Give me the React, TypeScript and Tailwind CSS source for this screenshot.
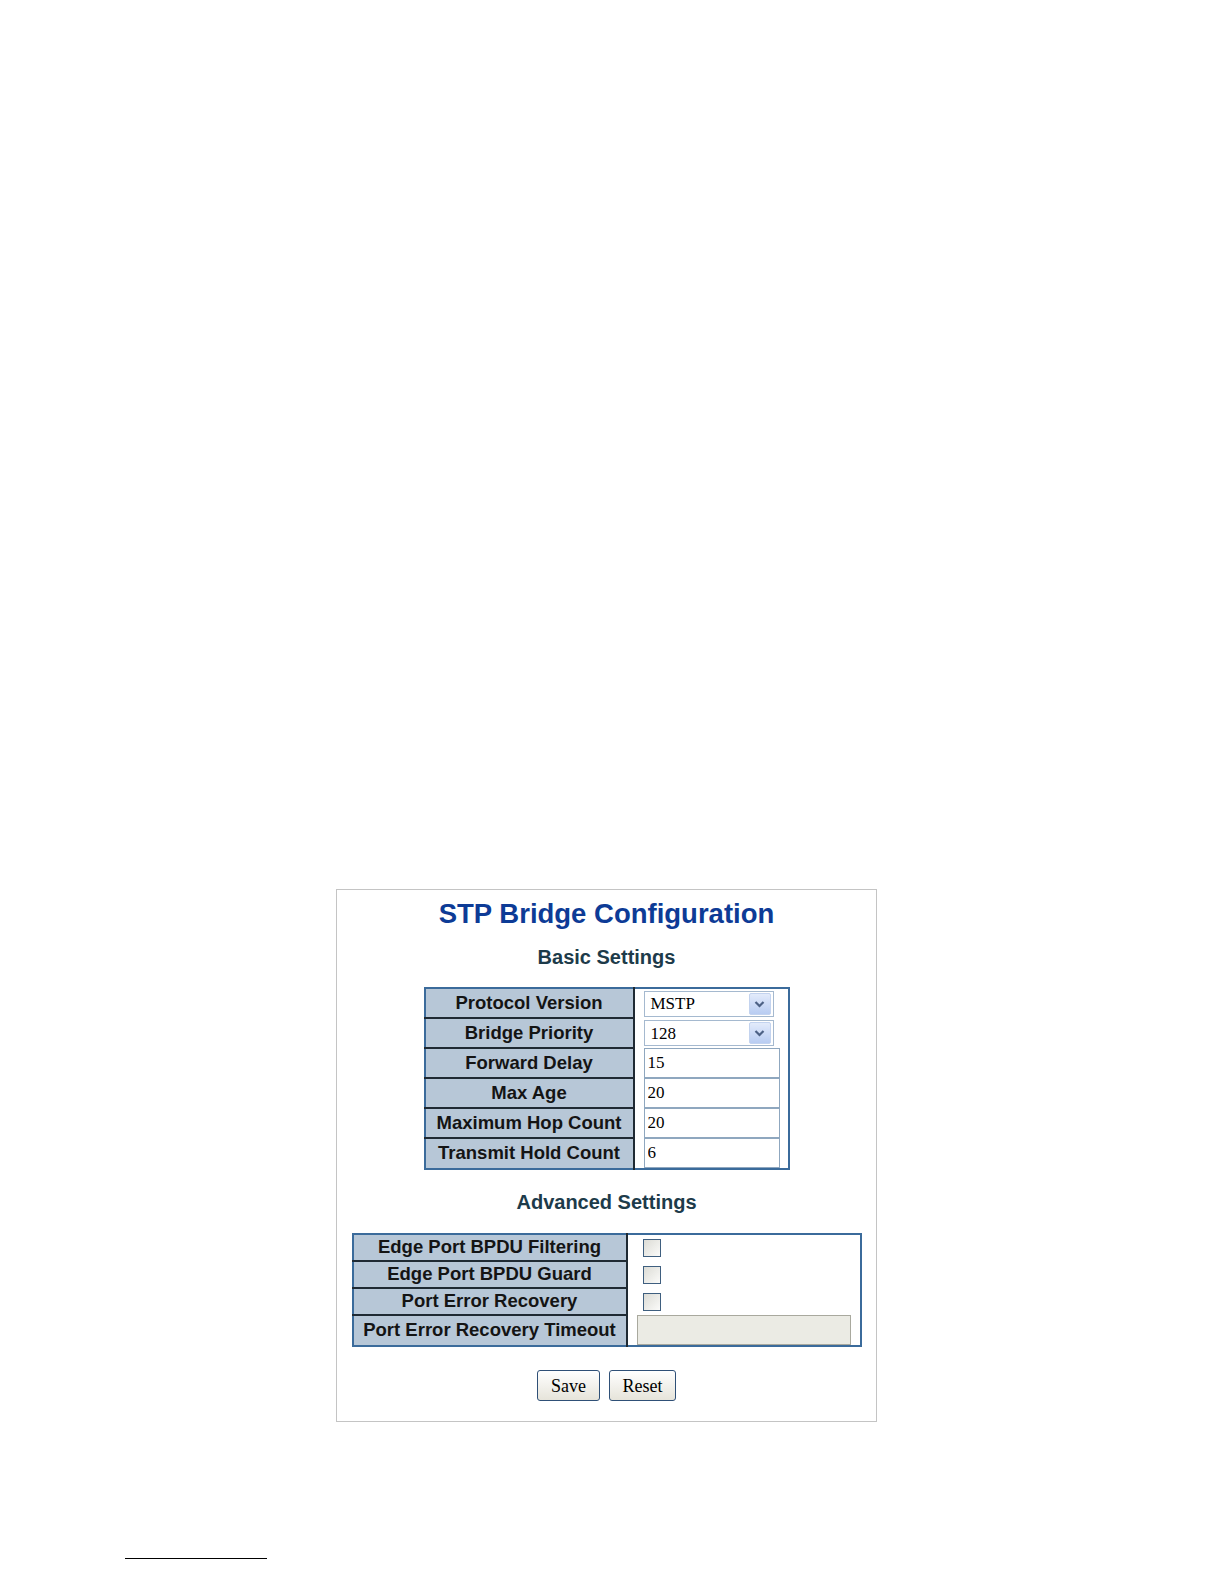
import React from 'react';

const basicRows: { label: string; kind: 'select' | 'input'; value: string }[] = [
  { label: 'Protocol Version', kind: 'select', value: 'MSTP' },
  { label: 'Bridge Priority', kind: 'select', value: '128' },
  { label: 'Forward Delay', kind: 'input', value: '15' },
  { label: 'Max Age', kind: 'input', value: '20' },
  { label: 'Maximum Hop Count', kind: 'input', value: '20' },
  { label: 'Transmit Hold Count', kind: 'input', value: '6' },
];

const advancedRows = ['Edge Port BPDU Filtering', 'Edge Port BPDU Guard', 'Port Error Recovery'];

const FakeSelect = ({ value }: { value: string }) => (
  <div className="flex h-[26px] w-[130px] items-center border border-[#a5b9cf] bg-white pl-[6px] pr-[2px]">
    <span className="flex-1 font-['Liberation_Serif',serif] text-[17px] leading-none text-black">{value}</span>
    <span className="flex h-[22px] w-[22px] items-center justify-center rounded-[2px] border border-[#c3d3ef] bg-gradient-to-b from-[#e3ebfb] to-[#b8ccf2]">
      <svg width="11" height="8" viewBox="0 0 11 8">
        <path d="M1.5 2 L5.5 6 L9.5 2" fill="none" stroke="#4d6185" strokeWidth="2.2" />
      </svg>
    </span>
  </div>
);

const Checkbox = () => (
  <span className="block h-[18px] w-[18px] border border-[#3f5f7f] bg-gradient-to-br from-[#dcdcd6] to-[#fbfbf9]" />
);

export default function App() {
  return (
    <div className="h-[1584px] w-full overflow-hidden bg-white font-['Liberation_Sans',Arial,sans-serif]">
      <div className="h-[889px]" />
      <div className="ml-[336px] flex h-[533px] w-[541px] flex-col items-center border border-[#c4c4c4] bg-white">
        <h1 className="mt-[8px] text-[27.5px] font-bold leading-[32px] text-[#0d3b96]">STP Bridge Configuration</h1>
        <h2 className="mt-[15px] text-[20px] font-bold leading-[24px] text-[#1d3b4a]">Basic Settings</h2>

        <table className="mt-[18px] border-collapse border-2 border-[#3b6b9b]">
          <tbody>
            {basicRows.map((r, i) => (
              <tr key={r.label} className="h-[30px]">
                <td
                  className={`w-[209px] border-r-2 border-[#1f2a33] bg-[#b7c7d7] p-0 text-center text-[18.5px] font-bold leading-none text-[#141414] ${
                    i < basicRows.length - 1 ? 'border-b-2' : ''
                  }`}
                >
                  {r.label}
                </td>
                <td className="w-[155px] p-0 pl-[9px] align-middle">
                  {r.kind === 'select' ? (
                    <FakeSelect value={r.value} />
                  ) : (
                    <input
                      readOnly
                      defaultValue={r.value}
                      className="block h-[30px] w-[136px] border border-[#8fa7bf] bg-white px-[3px] font-['Liberation_Serif',serif] text-[17px] text-black outline-none"
                    />
                  )}
                </td>
              </tr>
            ))}
          </tbody>
        </table>

        <h2 className="mt-[20px] text-[20px] font-bold leading-[24px] text-[#1d3b4a]">Advanced Settings</h2>

        <table className="mt-[19px] border-collapse border-2 border-[#3b6b9b]">
          <tbody>
            {advancedRows.map((label) => (
              <tr key={label} className="h-[27px]">
                <td className="w-[274px] border-b-2 border-r-2 border-[#1f2a33] bg-[#b7c7d7] p-0 text-center text-[18.5px] font-bold leading-none text-[#141414]">
                  {label}
                </td>
                <td className="w-[234px] p-0 pl-[15px] align-middle">
                  <Checkbox />
                </td>
              </tr>
            ))}
            <tr className="h-[31px]">
              <td className="w-[274px] border-r-2 border-[#1f2a33] bg-[#b7c7d7] p-0 text-center text-[18.5px] font-bold leading-none text-[#141414]">
                Port Error Recovery Timeout
              </td>
              <td className="w-[234px] p-0 pl-[9px] align-middle">
                <input
                  disabled
                  className="block h-[30px] w-[214px] border border-[#a9a99e] bg-[#ebebe4] outline-none"
                />
              </td>
            </tr>
          </tbody>
        </table>

        <div className="mt-[23px] flex gap-[9px]">
          <button className="h-[31px] w-[63px] rounded-[3px] border border-[#2f5077] bg-gradient-to-b from-white to-[#e6e4da] font-['Liberation_Serif',serif] text-[18px] leading-none text-black">
            Save
          </button>
          <button className="h-[31px] w-[67px] rounded-[3px] border border-[#2f5077] bg-gradient-to-b from-white to-[#e6e4da] font-['Liberation_Serif',serif] text-[18px] leading-none text-black">
            Reset
          </button>
        </div>
      </div>

      <div className="ml-[125px] mt-[136px] h-px w-[142px] bg-black" />
    </div>
  );
}
